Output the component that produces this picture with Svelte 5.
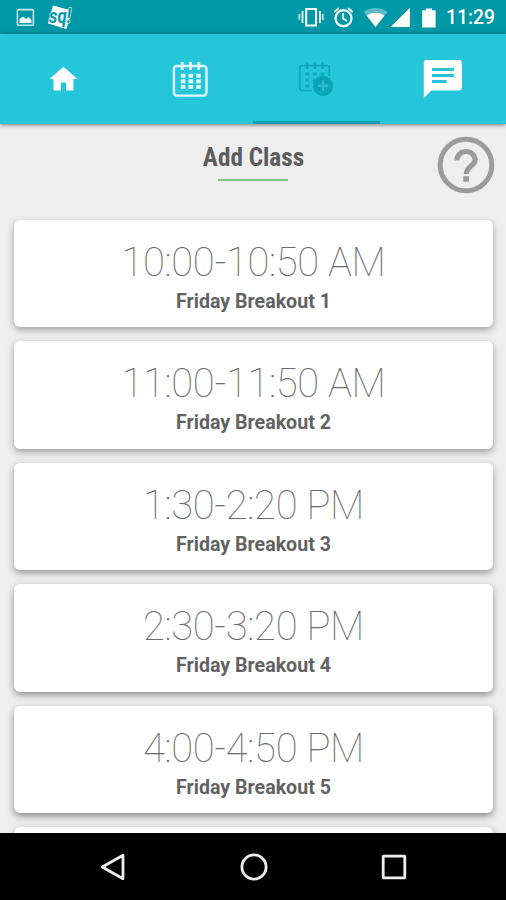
<script lang="ts">
    interface Session {
        time: string
        name: string
        depth: number
    }

    const sessions: Session[] = [
        { time: '10:00-10:50 AM', name: 'Friday Breakout 1', depth: 0.32 },
        { time: '11:00-11:50 AM', name: 'Friday Breakout 2', depth: 0.34 },
        { time: '1:30-2:20 PM', name: 'Friday Breakout 3', depth: 0.37 },
        { time: '2:30-3:20 PM', name: 'Friday Breakout 4', depth: 0.4 },
        { time: '4:00-4:50 PM', name: 'Friday Breakout 5', depth: 0.43 },
        { time: '', name: '', depth: 0.43 }
    ]

    const rows = [0, 1, 2]
    const tabs = ['home', 'calendar', 'add', 'chat']
    let active = $state('add')
</script>

<div class="screen">
    <header class="status">
        <svg width="80" height="34" viewBox="0 0 80 34">
            <rect x="17.4" y="9.6" width="16" height="15.6" rx="1" fill="none" stroke="#c5eaee" stroke-width="1.6" />
            <path d="M19.5 23v-4l3.5-2.5 3 2.5 2.5-2 3 3v3z" fill="#fff" />
            <path d="M53 5.5 71.5 10.5 66.5 29 48 23.5z" fill="#fff" />
            <text x="49" y="22.6" class="logo" textLength="22" lengthAdjust="spacingAndGlyphs">sq!</text>
        </svg>
        <div class="indicators">
            <svg width="144" height="34" viewBox="296 0 144 34" fill="#fff">
                <path d="M306.2 9h9.8v16.4h-9.8z" fill="none" stroke="#fff" stroke-width="2" />
                <path d="M302.5 11v12M320 11v12" stroke="#e1f4f6" stroke-width="2" />
                <path d="M299.3 14v6M322.9 14v6" stroke="#b5e2e7" stroke-width="1.8" />
                <circle cx="343.5" cy="18.2" r="8" fill="none" stroke="#fff" stroke-width="2.2" />
                <path d="M334.3 12l4.6-3.8M352.7 12l-4.6-3.8M343 13v5.5l4 2.5" fill="none" stroke="#fff" stroke-width="1.7" />
                <path d="M363.5 12c7-5.5 17-5.5 24 0L375.5 27z" fill="#5cbdc8" />
                <path d="M366.8 15.8c5-4 12.5-4 17.5 0L375.5 27z" />
                <path d="M410 7.7V27h-19.5z" />
                <path d="M426 8.4h6v1.8h3.6V27.5h-13.5V10.2h3.9z" />
            </svg>
            <span class="clock">11:29</span>
        </div>
    </header>

    <nav class="tabs">
        {#each tabs as tab}
            <button class:active={active === tab} onclick={() => (active = tab)} aria-label={tab}>
                {#if tab === 'home'}
                    <svg width="34" height="34" viewBox="0 0 34 34">
                        <path d="M17.5 4.8 31.5 17h-4.1v11.6h-7.3v-8.2h-5.2v8.2H7.5V17H3.5z" fill="#fff" />
                    </svg>
                {:else if tab === 'calendar'}
                    <svg width="36" height="36" viewBox="0 0 36 36">
                        <rect x="1.9" y="5" width="32.6" height="29.6" rx="3" fill="none" stroke="#e1f8fb" stroke-width="2.4" />
                        <path d="M10.3 1v8M18.6 1v8M26.8 1v8" stroke="#e1f8fb" stroke-width="2.8" />
                        {#each rows as row}
                            {#each rows as col}
                                <rect x={8.8 + col * 7.7} y={12.8 + row * 5.6} width="4.6" height="3.9" fill="#e1f8fb" />
                            {/each}
                        {/each}
                    </svg>
                {:else if tab === 'add'}
                    <svg width="36" height="36" viewBox="0 0 36 36">
                        <path d="M14 29.6H3.8a2 2 0 0 1-2-2V6.6a2 2 0 0 1 2-2h25.5a2 2 0 0 1 2 2V15" fill="none" stroke="#0da9bb" stroke-width="1.9" />
                        <path d="M9.3 1v7M16.8 1v7M24.5 1v7" stroke="#0da9bb" stroke-width="2.2" />
                        <path d="M7.3 11.5h4v3h-4zM14.8 11.5h4v3h-4zM22.5 11.5h4v3h-4zM7.3 17.5h4v3h-4zM14.8 17.5h2.5v3h-2.5zM7.3 23.5h4v3h-4z" fill="#0da9bb" />
                        <circle cx="25" cy="24.8" r="10.1" fill="#0aa4b6" />
                        <path d="M25 19.5v10.6M19.7 24.8h10.6" stroke="#27bfd2" stroke-width="2.3" />
                    </svg>
                {:else}
                    <svg width="40" height="40" viewBox="0 0 40 40">
                        <path d="M4 1h32a3 3 0 0 1 3 3v24.4a3 3 0 0 1-3 3H8.5L.8 39V4A3 3 0 0 1 4 1z" fill="#fff" />
                        <path d="M9 10.6h22M9 16.4h22M9 22.4h14.6" stroke="#28c3d8" stroke-width="3" />
                    </svg>
                {/if}
            </button>
        {/each}
    </nav>

    <main>
        <div class="heading">
            <h1>Add Class</h1>
            <svg class="help" width="58" height="58" viewBox="0 0 58 58" fill="none" stroke="#9b9b9b">
                <circle cx="29" cy="29" r="25.8" stroke-width="5" />
                <path d="M19.9 24.5c0-5.2 4-9 9.1-9s9.1 3.8 9.1 8.4c0 6-8.8 6.6-8.8 14.1" stroke-width="5.2" />
                <path d="M26.2 43h5.8" stroke-width="5.4" />
            </svg>
        </div>

        {#each sessions as session}
            <section class="card" style="--depth: {session.depth}">
                <div class="time">{session.time}</div>
                <div class="name">{session.name}</div>
            </section>
        {/each}
    </main>

    <footer>
        <svg width="30" height="30" viewBox="0 0 30 30">
            <path d="M25 3.3v23.4L4.3 15z" />
        </svg>
        <svg width="30" height="30" viewBox="0 0 30 30">
            <circle cx="15" cy="15" r="12.1" />
        </svg>
        <svg width="30" height="30" viewBox="0 0 30 30">
            <rect x="4.2" y="4.2" width="21.6" height="21.6" rx="0.5" />
        </svg>
    </footer>
</div>

<style>
    :global(body) {
        margin: 0;
    }

    .screen {
        display: flex;
        flex-direction: column;
        width: 506px;
        height: 900px;
        overflow: hidden;

        font-family: Roboto, sans-serif;
        color: #5c5c5c;
        background-color: #eee;
    }

    svg {
        display: block;
    }

    .status {
        display: flex;
        flex: none;
        justify-content: space-between;
        height: 34px;

        background-color: #0097a7;
    }

    .logo {
        font: italic 700 21px Roboto, sans-serif;
        fill: #0097a7;
        stroke: #fff;
        stroke-width: 1.2px;
        paint-order: stroke;
    }

    .indicators {
        display: flex;
        width: 210px;
    }

    .clock {
        margin-left: 6px;

        font-size: 19.3px;
        font-weight: 500;
        line-height: 36px;
        color: #fff;
    }

    .tabs {
        display: grid;
        flex: none;
        grid-template-columns: repeat(4, 1fr);
        height: 90px;
        z-index: 1;

        background-color: #26c6da;
        box-shadow: 0 1px 4px rgba(0, 0, 0, 0.5);
    }

    button {
        display: flex;
        align-items: center;
        justify-content: center;
        padding: 3px 0 0;

        border: 0;
        border-bottom: 3px solid transparent;
        background: none;
    }

    button.active {
        border-bottom-color: #0f9fb1;
    }

    main {
        flex: 1;
        min-height: 0;
        overflow: hidden;
    }

    .heading {
        display: grid;
        grid-template-columns: 1fr auto 1fr;
        align-items: start;
        height: 84px;
        padding: 12px 10px 0 11px;
    }

    h1 {
        grid-column: 2;
        margin: 7px 0 0;

        font-family: 'Roboto Condensed', Roboto, sans-serif;
        font-size: 25.2px;
        font-stretch: 75%;
        font-weight: 700;
        line-height: 30px;
    }

    h1::after {
        content: '';
        display: block;
        width: 70px;
        height: 2px;
        margin: 6px auto 0;

        background-color: #81c784;
    }

    .help {
        justify-self: end;
        margin-right: 1px;
    }

    .card {
        box-sizing: border-box;
        height: 107.4px;
        margin: 0 13px 14px 14px;
        padding-top: 19px;

        text-align: center;
        border-radius: 6px;
        background-color: #fff;
        box-shadow: 0 3px 7px rgba(0, 0, 0, var(--depth));
    }

    .time {
        font-size: 40px;
        font-weight: 100;
        line-height: 48px;
        letter-spacing: -0.35px;
        color: #6b6b6b;
    }

    .name {
        margin-top: 2px;

        font-size: 19.6px;
        font-weight: 700;
        line-height: 26px;
        color: #626262;
    }

    footer {
        display: flex;
        flex: none;
        align-items: center;
        justify-content: center;
        gap: 110.5px;
        height: 67px;
        padding-left: 1px;

        background-color: #000;
    }

    footer svg {
        fill: none;
        stroke: #eee;
        stroke-width: 2.8;
        stroke-linejoin: round;
    }
</style>
